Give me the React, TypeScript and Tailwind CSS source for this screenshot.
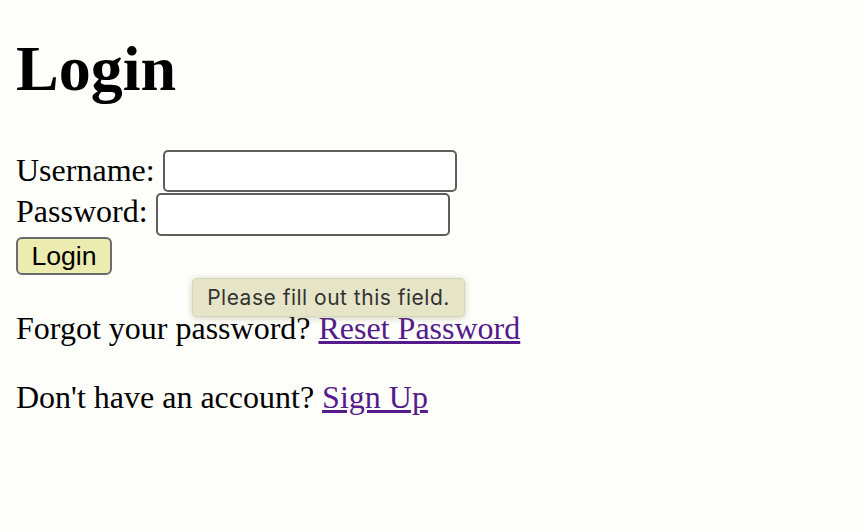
import React from "react";

export default function App() {
  return (
    <div className="relative min-h-[532px] w-full bg-[#fefefa] text-black" style={{ fontFamily: '"Liberation Serif", "Times New Roman", serif' }}>
      <div className="flex flex-col px-4">
        <h1 className="mt-[32px] text-[64px] font-bold leading-[74px]">Login</h1>
        <form className="flex flex-col" onSubmit={(e) => e.preventDefault()}>
          <div className="mt-[44px] flex h-[42px] items-start">
            <label className="mt-[2px] text-[32px] leading-[36.8px]">Username:</label>
            <input type="text" className="ml-[8px] h-[42px] w-[294px] rounded-[5px] border-2 border-[#5e5e5e] bg-white outline-none" />
          </div>
          <div className="mt-[1px] flex h-[43px] items-start">
            <label className="text-[32px] leading-[36.8px]">Password:</label>
            <input type="password" className="ml-[8px] h-[43px] w-[294px] rounded-[5px] border-2 border-[#5e5e5e] bg-white outline-none" />
          </div>
          <button
            type="submit"
            className="mt-[1px] flex h-[38px] w-[96px] items-center justify-center self-start rounded-[6px] border-2 border-[#6b6b6b] bg-[#ecebb0] text-[26.67px] text-black"
            style={{ fontFamily: '"Liberation Sans", Arial, sans-serif' }}
          >
            Login
          </button>
        </form>
        <p className="mt-[35px] text-[32px] leading-[36.8px]">
          Forgot your password? <a href="#" className="text-[#551a8b] underline">Reset Password</a>
        </p>
        <p className="mt-[32px] text-[32px] leading-[36.8px]">
          Don't have an account? <a href="#" className="text-[#551a8b] underline">Sign Up</a>
        </p>
      </div>
      <div
        className="absolute left-[192px] top-[278px] flex h-[39px] w-[273px] items-center justify-center rounded-[5px] border border-[#d6d5bd] bg-[#e6e5c8] text-[21px] tracking-[0.5px] text-[#333333] shadow-[0_1px_6px_rgba(120,120,60,0.35)]"
        style={{ fontFamily: 'Inter, "Liberation Sans", sans-serif' }}
      >
        Please fill out this field.
      </div>
    </div>
  );
}
